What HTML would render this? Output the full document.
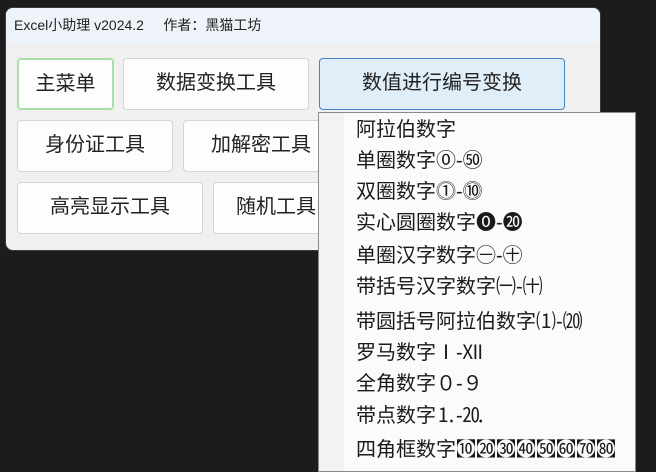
<!DOCTYPE html>
<html><head><meta charset="utf-8"><style>
*{margin:0;padding:0;box-sizing:border-box}
body{width:656px;height:463px;background:#1c1c1c;position:relative;overflow:hidden;font-family:"Liberation Sans","Noto Sans CJK SC",sans-serif;color:#1a1a1a}
.win{position:absolute;left:5px;top:7px;width:596px;height:244px;background:#f0f0f0;border-radius:8px;overflow:hidden;border:1px solid #3a3a3a}
.title{height:36px;background:#eef2f9;font-size:14px;line-height:34px;padding-left:8px;color:#222}
.b{position:absolute;background:#fdfdfd;border:1px solid #d4d4d4;border-radius:4px;font-size:20px;text-align:center;line-height:49px;color:#222}
.menu{position:absolute;left:318px;top:112px;width:318px;height:360px;background:#fbfbfb;border:1px solid #8a8a8a}
.gut{position:absolute;left:0;top:0;width:25px;height:100%;background:#f3f3f3}
.it{position:absolute;left:37px;font-size:20px;color:#1a1a1a;white-space:nowrap;line-height:24px;height:24px}
</style></head><body>
<div class="win"><div class="title">Excel小助理 v2024.2&nbsp;&nbsp;&nbsp;&nbsp;&nbsp;作者：黑猫工坊</div></div>
<div class="b" style="left:17px;top:58px;width:97px;height:52px;border:2px solid #a8e0a8">主菜单</div>
<div class="b" style="left:123px;top:58px;width:186px;height:52px">数据变换工具</div>
<div class="b" style="left:319px;top:58px;width:246px;height:52px;background:#e0eef9;border-color:#3a86c8">数值进行编号变换</div>
<div class="b" style="left:17px;top:120px;width:156px;height:52px">身份证工具</div>
<div class="b" style="left:183px;top:120px;width:156px;height:52px">加解密工具</div>
<div class="b" style="left:17px;top:182px;width:186px;height:52px">高亮显示工具</div>
<div class="b" style="left:213px;top:182px;width:126px;height:52px">随机工具</div>
<div class="menu"><div class="gut"></div>
<div class="it" style="top:5px">阿拉伯数字</div>
<div class="it" style="top:36px">单圈数字⓪-㊿</div>
<div class="it" style="top:67px">双圈数字⓵-⓾</div>
<div class="it" style="top:98px">实心圆圈数字⓿-⓴</div>
<div class="it" style="top:131px">单圈汉字数字㊀-㊉</div>
<div class="it" style="top:162px">带括号汉字数字㈠-㈩</div>
<div class="it" style="top:197px">带圆括号阿拉伯数字⑴-⒇</div>
<div class="it" style="top:228px">罗马数字Ⅰ-Ⅻ</div>
<div class="it" style="top:259px">全角数字０-９</div>
<div class="it" style="top:291px">带点数字⒈-⒛</div>
<div class="it" style="top:325px">四角框数字㉈㉉㉊㉋㉌㉍㉎㉏</div>
</div>
</body></html>
